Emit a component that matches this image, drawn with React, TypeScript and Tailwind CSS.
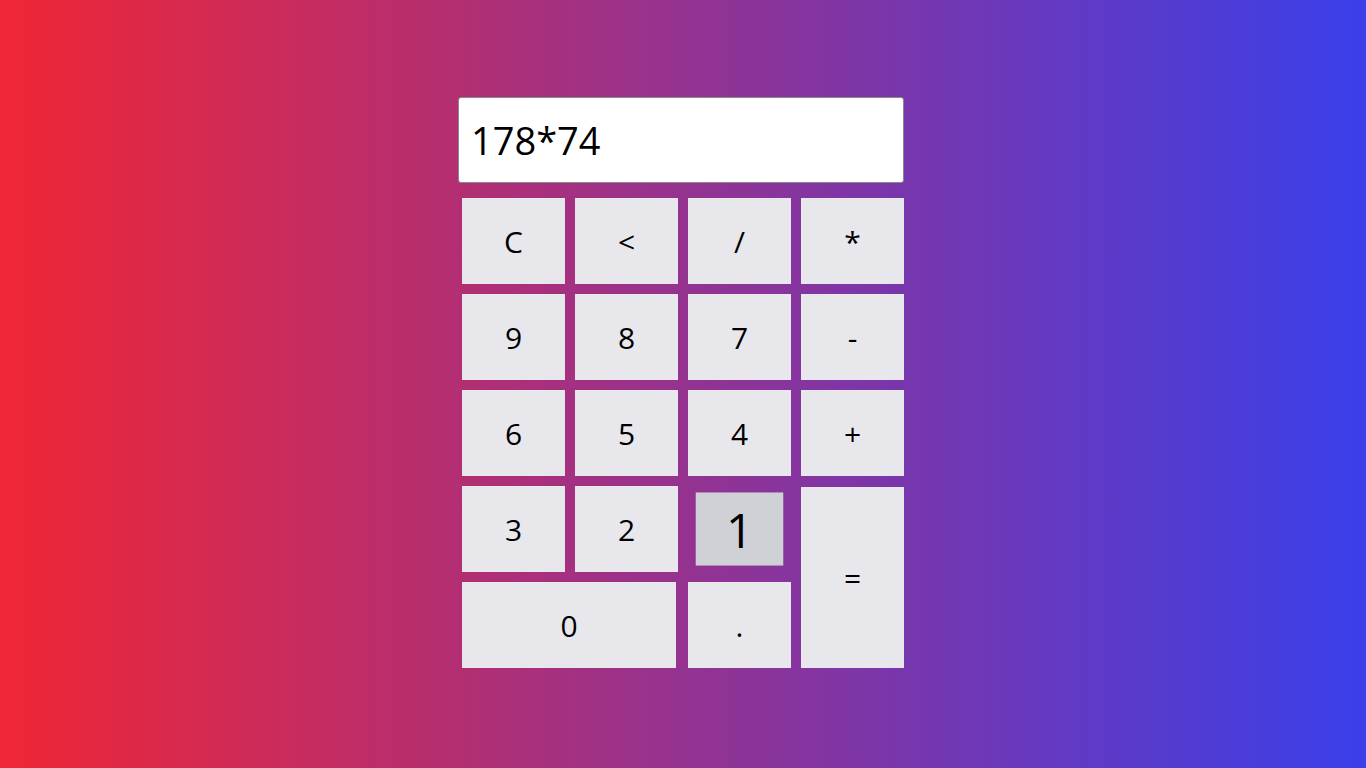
import { useState } from "react";

const keys: { label: string; span?: string }[] = [
  { label: "C" },
  { label: "<" },
  { label: "/" },
  { label: "*" },
  { label: "9" },
  { label: "8" },
  { label: "7" },
  { label: "-" },
  { label: "6" },
  { label: "5" },
  { label: "4" },
  { label: "+" },
  { label: "3" },
  { label: "2" },
  { label: "1" },
  { label: "=", span: "row-span-2 pt-[1px]" },
  { label: "0", span: "col-span-2 pr-[2px]" },
  { label: "." },
];

export default function App() {
  const [value, setValue] = useState("178*74");
  // the "1" key is shown in its pressed state, as in the screenshot
  const pressed = "1";

  const handleKey = (k: string) => {
    if (k === "C") setValue("");
    else if (k === "<") setValue((v) => v.slice(0, -1));
    else if (k === "=") {
      try {
        // eslint-disable-next-line no-new-func
        setValue(String(Function(`return (${value})`)()));
      } catch {
        setValue("Error");
      }
    } else setValue((v) => v + k);
  };

  return (
    <main
      className="min-h-screen w-full bg-linear-to-r/srgb from-[#f02636] to-[#3a3fea] flex justify-center pt-[97px]"
      style={{ fontFamily: '"Open Sans", "Noto Sans", sans-serif' }}
    >
      <div className="w-[446px] mr-[4px]">
        <input
          readOnly
          value={value}
          className="w-full h-[86px] bg-white rounded-[3px] border border-[#8a8a8a] px-[12px] text-[38px] text-black outline-none"
        />
        <div className="grid grid-cols-[repeat(4,103px)] auto-rows-[86px] gap-x-[10px] gap-y-[10px] pl-[4px] mt-[15px]">
          {keys.map((k) => (
            <div key={k.label} className={`${k.span ?? ""} flex`}>
              <button
                onClick={() => handleKey(k.label)}
                className={
                  k.label === pressed
                    ? "w-full h-full flex items-center justify-center bg-[#d0d1d6] text-black text-[56px] scale-[0.85]"
                    : "w-full h-full flex items-center justify-center bg-[#e8e7ec] text-black text-[30px]"
                }
              >
                {k.label}
              </button>
            </div>
          ))}
        </div>
      </div>
    </main>
  );
}
